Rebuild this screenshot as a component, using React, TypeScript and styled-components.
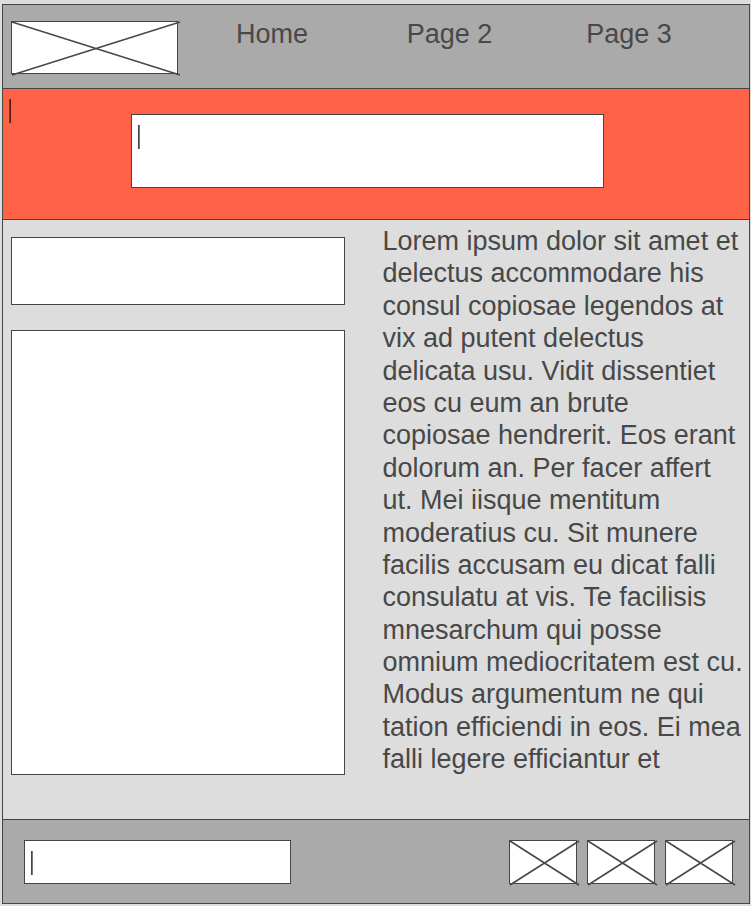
import React from "react";
import styled, { createGlobalStyle } from "styled-components";

const line = "#454545";
const ink = "#484848";

const GlobalStyle = createGlobalStyle`
  *, *::before, *::after { box-sizing: border-box; }
  body {
    margin: 0;
    background: #dddddd;
    color: ${ink};
    font-family: "Liberation Sans", Arial, sans-serif;
    font-size: 27px;
    line-height: 1.2;
  }
`;

const Page = styled.div`
  display: flex;
  flex-direction: column;
  min-height: calc(100vh - 6px);
  margin: 4px 1px 2px 2px;
  border: 1px solid ${line};
`;

const Header = styled.header`
  display: flex;
  align-items: flex-end;
  gap: 58px;
  min-height: 84px;
  padding: 13px 0 14px 8px;
  background: #aaaaaa;
  border-bottom: 1px solid ${line};
`;

const Nav = styled.nav`
  flex: 1;
  align-self: flex-start;
  display: grid;
  grid-template-columns: 171fr 180fr 163fr;
`;

const NavLink = styled.a`
  justify-self: start;
  color: inherit;
  text-decoration: none;
  white-space: nowrap;
`;

const Picture = styled.div<{ $width: number; $height: number }>`
  flex: none;
  width: ${(p) => p.$width}px;
  height: ${(p) => p.$height}px;
  background: #ffffff;
  border: 1px solid ${line};

  svg {
    display: block;
    overflow: visible;
  }
`;

const Banner = styled.section`
  display: grid;
  grid-template-columns: 128fr 473fr 145fr;
  padding: 10px 0 31px;
  background: #ff6347;
  border-bottom: 1px solid ${line};
`;

const Caret = styled.span`
  width: 2px;
  height: 24px;
  margin-left: 6px;
  background: linear-gradient(90deg, #852f22 50%, #4a1c16 50%);
`;

const TextBox = styled.input<{ $height: number }>`
  width: 100%;
  height: ${(p) => p.$height}px;
  padding: 0 8px;
  color: inherit;
  font: inherit;
  background: #ffffff linear-gradient(90deg, #444444 50%, #777777 50%) no-repeat
    6px 10px / 2px 24px;
  border: 1px solid ${line};
  border-radius: 0;
  outline: none;
`;

const BannerField = styled.div`
  display: flex;
  padding-top: 15px;
`;

const Main = styled.main`
  flex: 1;
  display: grid;
  grid-template-columns: 334fr 367fr;
  column-gap: 38px;
  padding-left: 8px;
`;

const Side = styled.div`
  display: flex;
  flex-direction: column;
  gap: 25px;
  padding: 17px 0 44px;
`;

const Panel = styled.section<{ $grow?: boolean }>`
  flex: ${(p) => (p.$grow ? "1" : "none")};
  min-height: 68px;
  background: #ffffff;
  border: 1px solid ${line};
`;

const Article = styled.p`
  margin: 0;
  padding: 5px 0 24px;
  white-space: pre-line;
`;

const Footer = styled.footer`
  display: flex;
  align-items: center;
  justify-content: space-between;
  padding: 20px 16px 19px 21px;
  background: #aaaaaa;
  border-top: 1px solid ${line};
`;

const FooterField = styled.div`
  display: flex;
  flex: 0 1 267px;
`;

const Pictures = styled.div`
  display: flex;
  gap: 10px;
`;

const articleText = `Lorem ipsum dolor sit amet et
delectus accommodare his
consul copiosae legendos at
vix ad putent delectus
delicata usu. Vidit dissentiet
eos cu eum an brute
copiosae hendrerit. Eos erant
dolorum an. Per facer affert
ut. Mei iisque mentitum
moderatius cu. Sit munere
facilis accusam eu dicat falli
consulatu at vis. Te facilisis
mnesarchum qui posse
omnium mediocritatem est cu.
Modus argumentum ne qui
tation efficiendi in eos. Ei mea
falli legere efficiantur et`;

function Placeholder({ width, height }: { width: number; height: number }) {
  return (
    <Picture $width={width} $height={height}>
      <svg width={width - 2} height={height - 2} aria-hidden="true">
        <path
          d={`M0 0L${width + 1} ${height}M0 ${height}L${width + 1} 0`}
          stroke={ink}
          strokeWidth="1.6"
          fill="none"
        />
      </svg>
    </Picture>
  );
}

export default function App() {
  return (
    <>
      <GlobalStyle />
      <Page>
        <Header>
          <Placeholder width={167} height={53} />
          <Nav>
            <NavLink href="#home">Home</NavLink>
            <NavLink href="#page-2">Page 2</NavLink>
            <NavLink href="#page-3">Page 3</NavLink>
          </Nav>
        </Header>
        <Banner>
          <Caret />
          <BannerField>
            <TextBox aria-label="Banner text" $height={74} />
          </BannerField>
        </Banner>
        <Main>
          <Side>
            <Panel />
            <Panel $grow />
          </Side>
          <Article>{articleText}</Article>
        </Main>
        <Footer>
          <FooterField>
            <TextBox aria-label="Footer text" $height={44} />
          </FooterField>
          <Pictures>
            <Placeholder width={68} height={44} />
            <Placeholder width={68} height={44} />
            <Placeholder width={68} height={44} />
          </Pictures>
        </Footer>
      </Page>
    </>
  );
}
